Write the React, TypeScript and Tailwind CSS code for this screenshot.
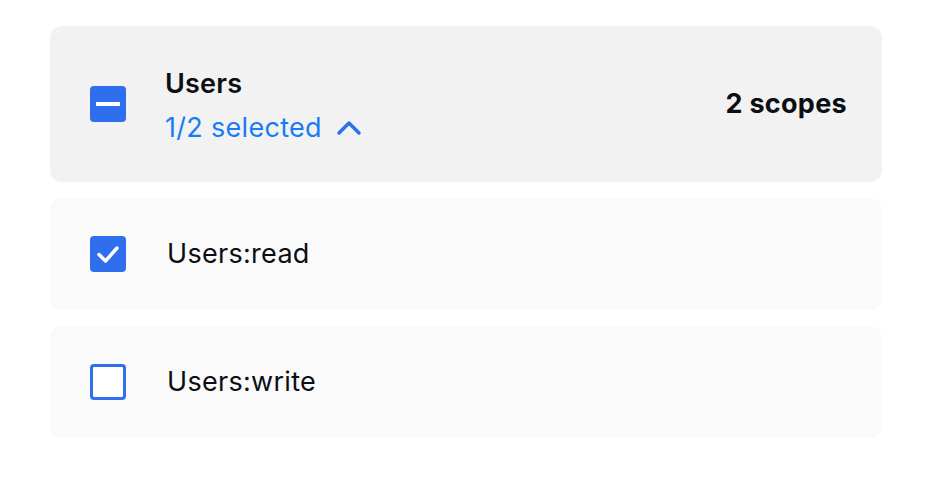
export default function App() {
  return (
    <main className="min-h-screen bg-white pl-[50px] pr-[48px] pt-[26px]" style={{ fontFamily: 'Inter, "Noto Sans", sans-serif' }}>
      <div className="flex flex-col gap-4">
        {/* Group header */}
        <div className="h-[156px] rounded-xl bg-[#f2f2f2] flex items-center pl-10 pr-[35px]">
          <div className="w-9 h-9 rounded-[4px] bg-[#2f6fed] flex items-center justify-center">
            <div className="w-6 h-[4px] bg-white" />
          </div>
          <div className="ml-[39px] flex flex-col pt-1">
            <span className="text-[27px] font-semibold text-[#0b0f14] leading-[44px] tracking-[0.2px]">Users</span>
            <span className="flex items-center gap-[14px] text-[27px] text-[#1a7cf2] leading-[44px] tracking-[0.3px]">
              1/2 selected
              <svg width="26" height="16" viewBox="0 0 26 16" fill="none">
                <path d="M3 13L13 3L23 13" stroke="#2f6fed" strokeWidth="3.5" strokeLinecap="round" strokeLinejoin="round" />
              </svg>
            </span>
          </div>
          <span className="ml-auto text-[27px] font-bold text-[#0b0f14] tracking-[0.3px]">2 scopes</span>
        </div>

        {/* Scope rows */}
        <div className="h-[112px] rounded-xl bg-[#fafafa] flex items-center pl-10">
          <div className="w-9 h-9 rounded-[4px] bg-[#2f6fed] flex items-center justify-center">
            <svg width="24" height="20" viewBox="0 0 24 20" fill="none">
              <path d="M3 10.5L9.5 17L21 4" stroke="white" strokeWidth="3.5" strokeLinecap="round" strokeLinejoin="round" />
            </svg>
          </div>
          <span className="ml-[41px] text-[27px] text-[#0b0f14] tracking-[0.3px]">Users:read</span>
        </div>
        <div className="h-[112px] rounded-xl bg-[#fafafa] flex items-center pl-10">
          <div className="w-9 h-9 rounded-[4px] border-[3px] border-[#2f6fed] bg-white" />
          <span className="ml-[41px] text-[27px] text-[#0b0f14] tracking-[0.3px]">Users:write</span>
        </div>
      </div>
    </main>
  )
}
